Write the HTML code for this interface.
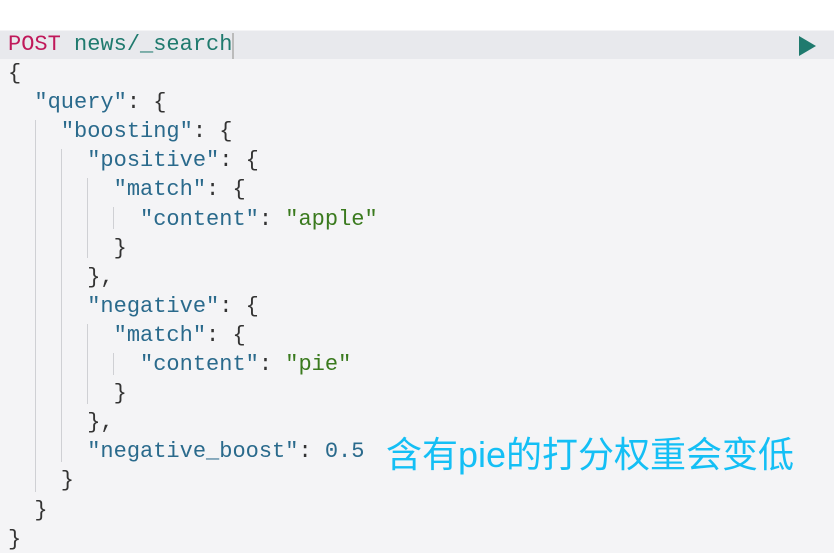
<!DOCTYPE html><html><head><meta charset="utf-8"><style>
body{margin:0;width:834px;height:558px;background:#fff;overflow:hidden;position:relative}
.ed{position:absolute;left:0;top:30px;width:834px;height:523px;background:#f4f4f6}
.hl{position:absolute;left:0;top:31px;width:834px;height:28px;background:#e8e9ed}
pre{position:absolute;left:8px;top:30px;margin:0;font-family:"Liberation Mono",monospace;font-size:22px;line-height:29.1px;color:#333}
.m{color:#c0185a}.u{color:#1f7a6e}.k{color:#2a6a8c}.s{color:#3a7a1e}.n{color:#2a6a8c}
.g{position:absolute;width:1px;background:#cfd0d4}
.cur{position:absolute;left:232px;top:33px;width:2px;height:26px;background:#bbb}
.play{position:absolute;left:799px;top:36px;width:0;height:0;border-left:17px solid #1f7a6e;border-top:10px solid transparent;border-bottom:10px solid transparent}
.note{position:absolute;left:386px;top:426px;font-family:"Liberation Sans","Noto Sans CJK SC",sans-serif;font-size:36px;color:#14bff5;white-space:nowrap}
</style></head><body>
<div class="ed"></div><div class="hl"></div><div class="cur"></div><div class="play"></div>
<div class="g" style="left:35px;top:120px;height:372px"></div>
<div class="g" style="left:61px;top:149px;height:313px"></div>
<div class="g" style="left:87px;top:178px;height:80px"></div>
<div class="g" style="left:87px;top:324px;height:80px"></div>
<div class="g" style="left:113px;top:207px;height:22px"></div>
<div class="g" style="left:113px;top:353px;height:22px"></div>
<pre><span class="m">POST</span> <span class="u">news/_search</span>
{
  <span class="k">"query"</span>: {
    <span class="k">"boosting"</span>: {
      <span class="k">"positive"</span>: {
        <span class="k">"match"</span>: {
          <span class="k">"content"</span>: <span class="s">"apple"</span>
        }
      },
      <span class="k">"negative"</span>: {
        <span class="k">"match"</span>: {
          <span class="k">"content"</span>: <span class="s">"pie"</span>
        }
      },
      <span class="k">"negative_boost"</span>: <span class="n">0.5</span>
    }
  }
}</pre>
<div class="note">含有pie的打分权重会变低</div>
</body></html>
